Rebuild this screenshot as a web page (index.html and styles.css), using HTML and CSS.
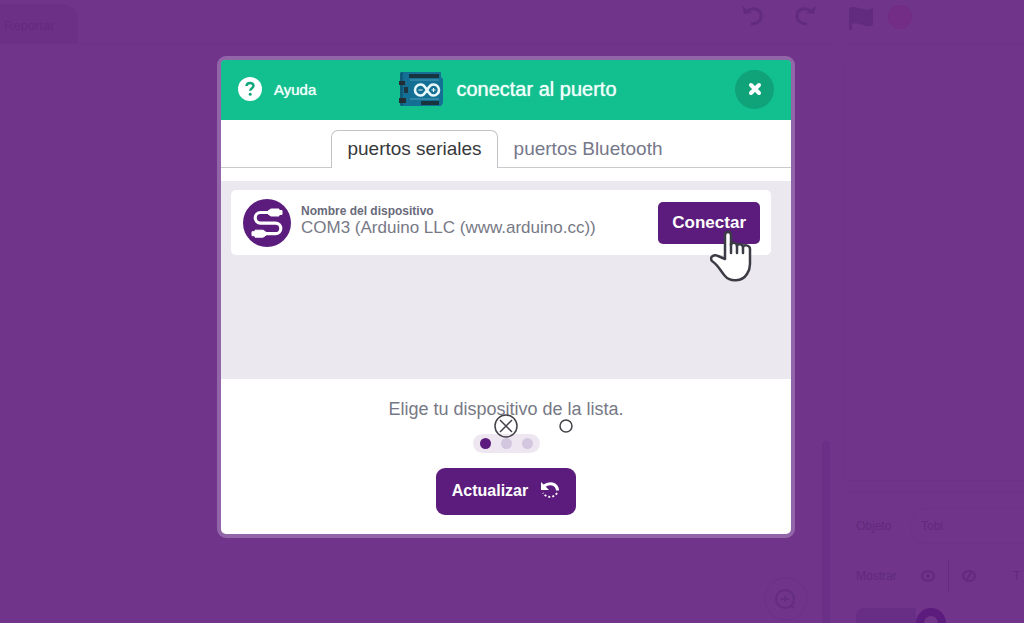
FILE: index.html
```html
<!DOCTYPE html>
<html lang="es">
<head>
<meta charset="utf-8">
<title>Conectar al puerto</title>
<meta name="viewport" content="width=device-width, initial-scale=1">
<link rel="stylesheet" href="styles.css">
</head>
<body>
<div class="editor" aria-hidden="true">
  <div class="workspace">
    <div class="workbar">
      <span class="worktab">Reportar</span>
      <div class="history">
        <svg width="24" height="24" viewBox="0 0 24 24"><path class="line" d="M6 7c5-4 14-3 14 5 0 5-4 8-10 8"/><path class="solid" d="M1 2l2 8 8-1z"/></svg>
        <svg width="24" height="24" viewBox="0 0 24 24"><path class="line" d="M18 7C13 3 4 4 4 12c0 5 4 8 10 8"/><path class="solid" d="M23 2l-2 8-8-1z"/></svg>
      </div>
    </div>
    <div class="canvas">
      <div class="zoomer">
        <svg width="44" height="44" viewBox="0 0 44 44"><circle class="ring" cx="22" cy="22" r="21"/><circle class="thin" cx="21" cy="22" r="9"/><path class="thin" d="M17 22h8M21 19v6M27 29l3 2"/></svg>
      </div>
      <div class="scrollbar"></div>
    </div>
  </div>
  <div class="side">
    <div class="controls">
      <svg width="26" height="26" viewBox="0 0 26 26"><path class="solid" d="M1 3c8-4 14 5 24 0v17c-9 4-13-4-21-1v6H1z"/></svg>
      <svg width="24" height="24" viewBox="0 0 24 24"><circle class="stop" cx="12" cy="12" r="12"/></svg>
    </div>
    <div class="stage"></div>
    <div class="sprite">
      <div class="field"><span class="key">Objeto</span><span class="value">Tobi</span></div>
      <div class="field"><span class="key">Mostrar</span>
        <span class="eyes">
          <svg width="16" height="14" viewBox="0 0 16 14"><ellipse class="line" cx="8" cy="7" rx="6" ry="5"/><circle class="solid" cx="8" cy="7" r="2"/></svg>
          <i class="divider"></i>
          <svg width="16" height="14" viewBox="0 0 16 14"><ellipse class="line" cx="8" cy="7" rx="6" ry="5"/><path class="line" d="M5 12l6-10"/></svg>
        </span>
        <span>T</span>
      </div>
      <div class="thumbs"><div class="thumb"></div><i class="badge"></i></div>
    </div>
  </div>
</div>

<div class="overlay">
  <section class="dialog" role="dialog" aria-modal="true" aria-labelledby="title">
    <header class="header">
      <button class="help" type="button">
        <svg width="24" height="24" viewBox="0 0 24 24"><circle cx="12" cy="12" r="12" fill="#fff"/><path d="M8.500 9c.3-4.200 7.300-4 7 0-.2 2.200-3.200 2.200-3.300 4.800" fill="none" stroke="#12a67d" stroke-width="2.500"/><circle cx="12.200" cy="17.300" r="1.500" fill="#12a67d"/></svg>
        <span>Ayuda</span>
      </button>
      <div class="heading">
        <svg width="44" height="36" viewBox="0 0 44 36">
          <path d="M3 1h38q1 0 1 1v4l2 2v24l-2 3H3q-2 0-2-2V3q0-2 2-2z" fill="#146f94"/>
          <path d="M1 3q0-2 2-2h1v34H3q-2 0-2-2z" fill="#0d5a7a"/>
          <path d="M10 3h30v4H10zM22 30h18v4H22z" fill="#17343f"/>
          <path d="M11 9h29M11 28h29" stroke="#4d9ab5" stroke-width="1"/>
          <path d="M0 10h6v4H0zM0 27h7v5H0z" fill="#222c31"/>
          <path d="M5 16h4v6H5z" fill="#1d3540"/>
          <path d="M28 19c-3-4.500-4-5.500-6.500-5.500a5.500 5.500 0 0 0 0 11c2.500 0 3.500-1 6.500-5.500s4-5.500 6.500-5.500a5.500 5.500 0 0 1 0 11c-2.500 0-3.500-1-6.500-5.500z" fill="none" stroke="#e8f8fa" stroke-width="2.600"/>
          <path d="M19.500 19h4M32.500 19h4M34.500 17v4" stroke="#e8f8fa" stroke-width="1.200"/>
        </svg>
        <h1 id="title">conectar al puerto</h1>
      </div>
      <button class="close" type="button" aria-label="Cerrar">
        <svg width="14" height="14" viewBox="0 0 14 14"><path d="M3 3l8 8M11 3l-8 8" stroke="#fff" stroke-width="4" stroke-linecap="round"/></svg>
      </button>
    </header>
    <div class="tabs" role="tablist">
      <button class="tab selected" type="button" role="tab" aria-selected="true">puertos seriales</button>
      <button class="tab" type="button" role="tab" aria-selected="false">puertos Bluetooth</button>
    </div>
    <div class="list">
      <article class="device">
        <svg class="port" width="48" height="48" viewBox="0 0 48 48">
          <circle cx="24" cy="24" r="24" fill="#5c1c7d"/>
          <path d="M27 13.500H17.500a5.300 5.300 0 0 0 0 10.600h15a5.300 5.300 0 0 1 0 10.600H21" fill="none" stroke="#fff" stroke-width="3.200"/>
          <path d="M25 12l3-2h8v1.500h3v4h-3V17h-8l-3-2zM23 33.200l-3-2h-8v1.500H9v4h3v1.500h8l3-2z" fill="#fff" stroke="#fff" stroke-linejoin="round"/>
        </svg>
        <div class="info">
          <span class="label">Nombre del dispositivo</span>
          <span class="name">COM3 (Arduino LLC (www.arduino.cc))</span>
        </div>
        <div class="action">
          <button class="connect" type="button">Conectar</button>
          <svg class="pointer" width="42" height="54" viewBox="0 0 42 54"><path d="M15 29V5q0-3 3-3t3 3v10c0-3 6-3 6 1 0-3 6-2 6 1 0-3 7-2 7 2v15c0 5-1 7-3 10-5 8-17 8-22 2-5-6-7-11-13-15-3-4 2-7 6-5z" fill="#fff" stroke="#3c3c46" stroke-width="2.500" stroke-linejoin="round"/><path d="M21 14v9M27 15v8M33 16v7" fill="none" stroke="#3c3c46" stroke-width="2.500" stroke-linecap="round"/></svg>
        </div>
      </article>
    </div>
    <footer class="footer">
      <p class="hint">Elige tu dispositivo de la lista.</p>
      <div class="steps">
        <i class="dot current"></i><i class="dot"></i><i class="dot"></i>
        <svg class="marks" width="80" height="26" viewBox="0 0 80 26"><g fill="none" stroke="#454149" stroke-width="1.500"><circle cx="13" cy="13" r="11"/><path d="M7 7l12 12M19 7l-12 12"/><circle cx="73" cy="13" r="6"/></g></svg>
      </div>
      <button class="refresh" type="button">Actualizar
        <svg width="20" height="20" viewBox="0 0 20 20" fill="none" stroke="#fff"><path d="M4 6c5-4 13-3 13.500 4.500" stroke-width="3"/><path d="M1 2v8h8z" fill="#fff" stroke="none"/><path d="M17 13a8 7.500 0 0 1-14 0" stroke-width="1.800" stroke-dasharray="2 2"/></svg>
      </button>
    </footer>
  </section>
</div>
</body>
</html>
```
FILE: styles.css
```css
* { box-sizing: border-box; }

body {
  margin: 0;
  min-height: 100vh;
  overflow: hidden;
  background: #70348a;
  font-family: "Liberation Sans", Arial, sans-serif;
}

button {
  border: 0;
  padding: 0;
  background: none;
  color: inherit;
  font: inherit;
  cursor: pointer;
}

svg { display: block; flex: none; }

/* Dimmed editor behind the dialog */
.editor {
  display: flex;
  height: 100vh;
  overflow: hidden;
  color: #612a7e;
  font-size: 12px;
}

.workspace { flex: 1; display: flex; flex-direction: column; }

.workbar {
  display: flex;
  justify-content: space-between;
  height: 44px;
  padding-top: 4px;
  border-bottom: 1px solid #6c3188;
}

.worktab {
  width: 78px;
  padding: 14px 4px;
  border-radius: 0 16px 0 0;
  background: #6c3087;
  color: #642a80;
  font-size: 13px;
}

.history { display: flex; gap: 28px; padding-right: 15px; }

.line { fill: none; stroke: #622b80; stroke-width: 2; }
.history .line { stroke-width: 3; }
.solid { fill: #622b80; }
.thin { fill: none; stroke: #652d82; stroke-width: 2; }
.ring { fill: none; stroke: #6c3187; }
.stop { fill: #732d86; }

.canvas {
  flex: 1;
  display: flex;
  justify-content: flex-end;
  align-items: flex-end;
  gap: 14px;
}

.zoomer { padding-bottom: 2px; }
.scrollbar { width: 8px; height: 182px; margin-right: 2px; border-radius: 4px 4px 0 0; background: #6a2f86; }

.side { width: 192px; display: flex; flex-direction: column; padding-left: 12px; }
.controls { display: flex; gap: 14px; padding: 5px 4px; height: 44px; border-bottom: 1px solid #6c3188; }
.stage { flex: 1; margin-top: 20px; border-left: 1px solid #6d3288; border-bottom: 1px solid #6c3188; }
.sprite { height: 132px; margin-top: 10px; border-top: 1px solid #6c3188; padding: 16px 0 0 12px; white-space: nowrap; }
.field { display: flex; align-items: center; height: 36px; margin-bottom: 14px; }
.key { width: 54px; }
.value { flex: 1; padding: 10px; border: 1px solid #6e3389; border-right: 0; border-radius: 16px 0 0 16px; }
.eyes { display: flex; align-items: center; gap: 12px; padding: 0 36px 0 10px; }
.divider { width: 1px; height: 34px; background: #642c81; }
.thumbs { display: flex; align-items: flex-start; }
.thumb { width: 60px; height: 24px; border-radius: 8px 0 0 0; background: #682d84; }
.badge { width: 30px; height: 30px; border-radius: 50%; border: 8px solid #5c1c7d; }

/* Connection dialog */
.overlay {
  position: fixed;
  inset: 0;
  display: flex;
  align-items: center;
  justify-content: center;
  padding: 0 12px 30px 0;
}

.dialog {
  width: 100%;
  max-width: 578px;
  border: 4px solid #9265a8;
  border-radius: 9px;
  background: #fff;
}

.header {
  display: grid;
  grid-template-columns: 1fr auto 1fr;
  align-items: center;
  padding: 10px 17px 11px;
  border-radius: 4px 4px 0 0;
  background: #12bf8f;
  color: #effff9;
}

.help { display: flex; align-items: center; gap: 12px; font-size: 15px; text-shadow: 0 0 1px #effff9; }
.heading { display: flex; align-items: center; gap: 13px; padding-left: 4px; }
.heading h1 { margin: 0; padding-bottom: 1px; font-size: 20px; line-height: 24px; font-weight: 400; text-shadow: 0 0 1px #effff9; }

.close {
  justify-self: end;
  display: flex;
  align-items: center;
  justify-content: center;
  width: 39px;
  height: 39px;
  border-radius: 50%;
  background: #10a279;
}

.tabs { display: flex; justify-content: center; padding: 10px 2px 0 0; margin-bottom: 13px; box-shadow: inset 0 -1px #cbc9cd; }

.tab {
  height: 38px;
  padding: 0 15px;
  border: 1px solid transparent;
  border-bottom: 0;
  color: #76778a;
  font-size: 19px;
}

.tab.selected { border-color: #c4c2c7; border-radius: 7px 7px 0 0; background: #fff; color: #38383c; }

.list { min-height: 198px; padding: 9px 20px 9px 10px; background: #ece8ef; }

.device {
  display: flex;
  align-items: center;
  gap: 10px;
  padding: 9px 11px 8px 12px;
  border-radius: 5px;
  background: #fff;
  color: #777986;
}

.info { flex: 1; display: flex; flex-direction: column; padding-bottom: 4px; }
.label { color: #696a7a; font-size: 12px; line-height: 14px; font-weight: 700; }
.name { font-size: 17px; line-height: 20px; }
.action { position: relative; }

.connect {
  display: block;
  padding: 11px 14px;
  border-radius: 5px;
  background: #5c1c7d;
  color: #fff;
  font-size: 17px;
  line-height: 20px;
  font-weight: 700;
}

.pointer { position: absolute; left: 52px; top: 28px; pointer-events: none; }

.footer { display: flex; flex-direction: column; align-items: center; padding: 19px 16px; }
.hint { margin: 0 0 14px; color: #777986; font-size: 18px; line-height: 22px; }

.steps {
  position: relative;
  display: flex;
  gap: 10px;
  margin-bottom: 15px;
  padding: 4px 7px;
  border-radius: 10px;
  background: #eee7f2;
}

.dot { width: 11px; height: 11px; border-radius: 50%; background: #d2c7de; }
.dot.current { background: #5c1c7d; }
.marks { position: absolute; left: 20px; top: -21px; }

.refresh {
  display: flex;
  align-items: center;
  gap: 12px;
  padding: 12px 16px 14px;
  border-radius: 9px;
  background: #5c1c7d;
  color: #fff;
  font-size: 16px;
  line-height: 21px;
  font-weight: 700;
}
```
